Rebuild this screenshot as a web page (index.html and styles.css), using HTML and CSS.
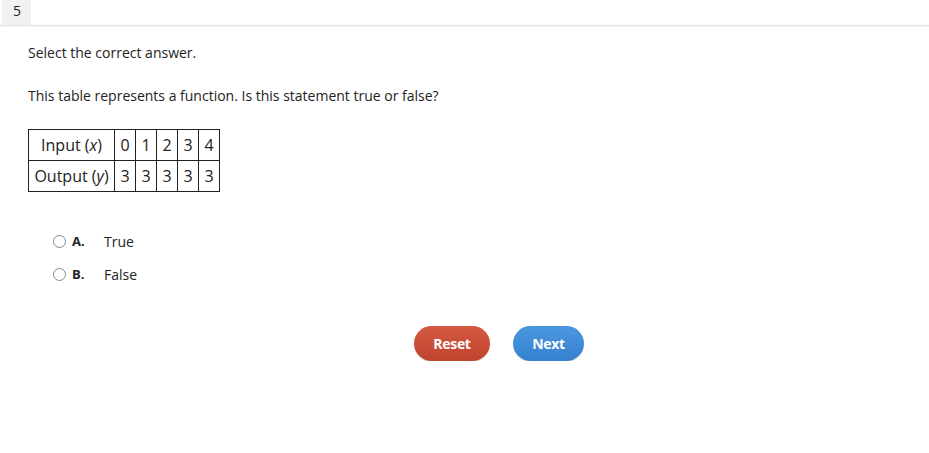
FILE: index.html
```html
<!DOCTYPE html>
<html>
<head>
<meta charset="utf-8">
<link rel="stylesheet" href="styles.css">
</head>
<body>
<div class="header">
  <div class="qnum">5</div>
</div>
<div class="content">
  <p class="prompt">Select the correct answer.</p>
  <p class="question">This table represents a function. Is this statement true or false?</p>
  <table class="ftable">
    <tr><td class="lbl">Input (<i>x</i>)</td><td>0</td><td>1</td><td>2</td><td>3</td><td>4</td></tr>
    <tr><td class="lbl">Output (<i>y</i>)</td><td>3</td><td>3</td><td>3</td><td>3</td><td>3</td></tr>
  </table>
  <div class="options">
    <label class="opt"><span class="radio"></span><span class="letter">A.</span><span class="otext">True</span></label>
    <label class="opt"><span class="radio"></span><span class="letter">B.</span><span class="otext">False</span></label>
  </div>
  <div class="buttons">
    <button class="btn reset">Reset</button>
    <button class="btn next">Next</button>
  </div>
</div>
</body>
</html>
```
FILE: styles.css
```css
* { box-sizing: border-box; }
body {
  margin: 0;
  font-family: "Open Sans", "Liberation Sans", sans-serif;
  color: #222;
  background: #fff;
}
.header {
  height: 26px;
  border-bottom: 1px solid #e2e2e2;
  box-shadow: 0 1px 0 #f6f6f6;
  display: flex;
}
.qnum {
  margin-left: 2px;
  width: 29px;
  height: 25px;
  background: #f1f1f1;
  font-size: 14px;
  line-height: 22px;
  padding-left: 11px;
  color: #222;
}
.content {
  padding-left: 28px;
}
.prompt {
  margin: 17px 0 0;
  font-size: 14px;
  line-height: 20px;
}
.question {
  margin: 23px 0 0;
  font-size: 14px;
  line-height: 20px;
}
.ftable {
  margin-top: 23px;
  border-collapse: collapse;
  font-size: 16px;
  color: #222;
}
.ftable td {
  border: 1px solid #222;
  height: 31px;
  width: 21px;
  text-align: center;
  padding: 0;
}
.ftable td.lbl {
  width: 86px;
  padding: 0 3px;
}
.options {
  margin-top: 39px;
  padding-left: 25px;
  display: flex;
  flex-direction: column;
  gap: 13px;
}
.opt {
  display: flex;
  align-items: center;
  height: 20px;
  font-size: 14px;
}
.radio {
  width: 13px;
  height: 13px;
  border: 1px solid #888;
  border-radius: 50%;
  background: #fff;
  margin-right: 6px;
}
.letter {
  font-weight: bold;
  width: 32px;
  font-size: 13px;
}
.buttons {
  margin-top: 42px;
  padding-left: 386px;
  display: flex;
  gap: 23px;
}
.btn {
  border: none;
  height: 35px;
  border-radius: 18px;
  color: #fff;
  font-family: "Open Sans", "Liberation Sans", sans-serif;
  font-weight: bold;
  font-size: 14px;
  letter-spacing: -0.3px;
  padding: 0;
}
.reset {
  width: 76px;
  background: linear-gradient(#d45a42, #c0432e);
  box-shadow: 0 1px 1px rgba(0,0,0,0.15);
}
.next {
  width: 71px;
  background: linear-gradient(#4b97df, #3581cf);
  box-shadow: 0 1px 1px rgba(0,0,0,0.15);
}
```
